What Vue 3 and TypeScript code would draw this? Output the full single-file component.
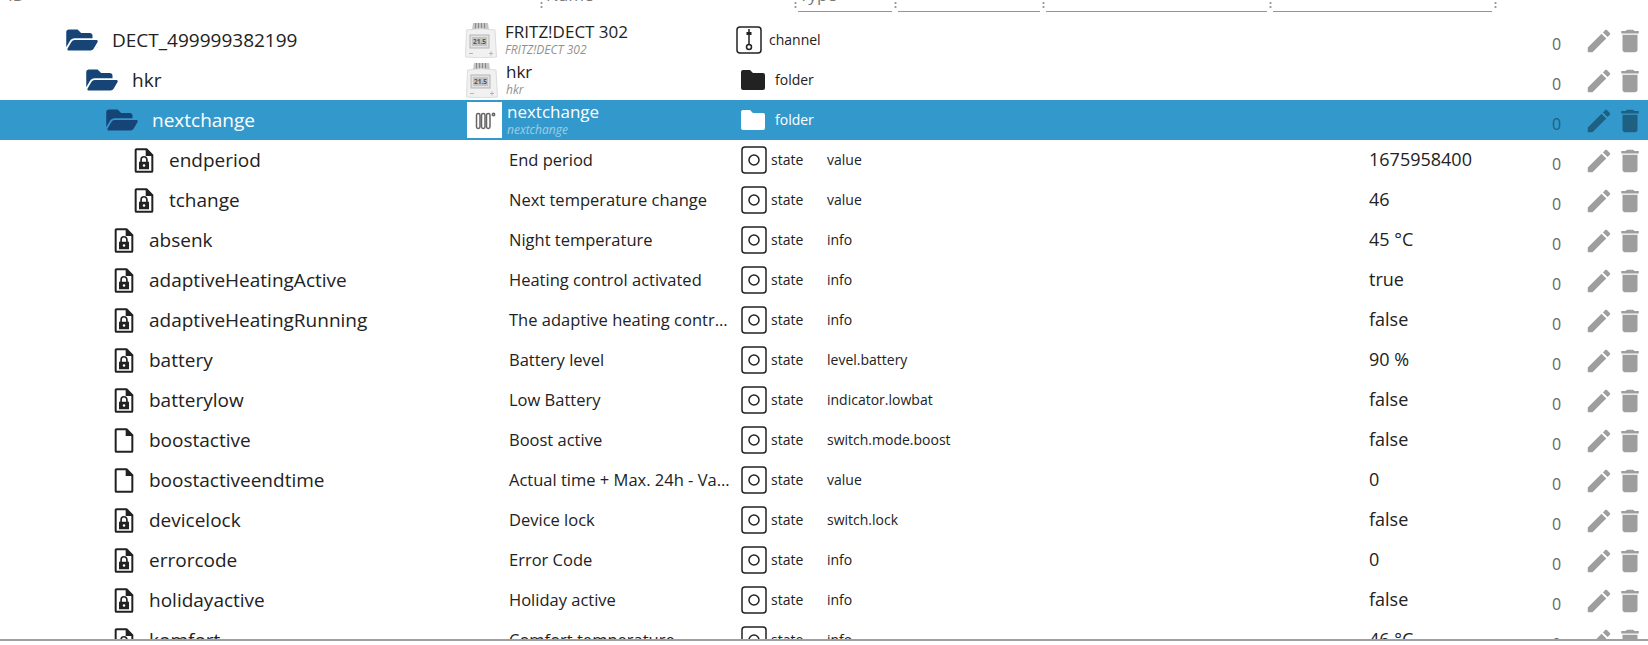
<script setup lang="ts">
type Row = {
  id: string
  indent: number
  icon: 'open' | 'lock' | 'file'
  name: string
  sub?: string
  pic?: 'dect' | 'radiator'
  picShift?: number
  type: 'channel' | 'folder' | 'state'
  role?: string
  value?: string
  selected?: boolean
}

const rows: Row[] = [
  { id: 'DECT_499999382199', indent: 66, icon: 'open', name: 'FRITZ!DECT 302', sub: 'FRITZ!DECT 302', pic: 'dect', picShift: 0, type: 'channel' },
  { id: 'hkr', indent: 86, icon: 'open', name: 'hkr', sub: 'hkr', pic: 'dect', picShift: 1, type: 'folder' },
  { id: 'nextchange', indent: 106, icon: 'open', name: 'nextchange', sub: 'nextchange', pic: 'radiator', picShift: 2, type: 'folder', selected: true },
  { id: 'endperiod', indent: 134, icon: 'lock', name: 'End period', type: 'state', role: 'value', value: '1675958400' },
  { id: 'tchange', indent: 134, icon: 'lock', name: 'Next temperature change', type: 'state', role: 'value', value: '46' },
  { id: 'absenk', indent: 114, icon: 'lock', name: 'Night temperature', type: 'state', role: 'info', value: '45 °C' },
  { id: 'adaptiveHeatingActive', indent: 114, icon: 'lock', name: 'Heating control activated', type: 'state', role: 'info', value: 'true' },
  { id: 'adaptiveHeatingRunning', indent: 114, icon: 'lock', name: 'The adaptive heating contr...', type: 'state', role: 'info', value: 'false' },
  { id: 'battery', indent: 114, icon: 'lock', name: 'Battery level', type: 'state', role: 'level.battery', value: '90 %' },
  { id: 'batterylow', indent: 114, icon: 'lock', name: 'Low Battery', type: 'state', role: 'indicator.lowbat', value: 'false' },
  { id: 'boostactive', indent: 114, icon: 'file', name: 'Boost active', type: 'state', role: 'switch.mode.boost', value: 'false' },
  { id: 'boostactiveendtime', indent: 114, icon: 'file', name: 'Actual time + Max. 24h - Va...', type: 'state', role: 'value', value: '0' },
  { id: 'devicelock', indent: 114, icon: 'lock', name: 'Device lock', type: 'state', role: 'switch.lock', value: 'false' },
  { id: 'errorcode', indent: 114, icon: 'lock', name: 'Error Code', type: 'state', role: 'info', value: '0' },
  { id: 'holidayactive', indent: 114, icon: 'lock', name: 'Holiday active', type: 'state', role: 'info', value: 'false' },
  { id: 'komfort', indent: 114, icon: 'lock', name: 'Comfort temperature', type: 'state', role: 'info', value: '46 °C' },
]
</script>

<template>
  <div class="page">
    <div class="head">
      <div class="head-cell head-id"><span>ID</span></div>
      <i class="sep sep--wide"></i>
      <div class="head-cell head-name"><span>Name</span></div>
      <i class="sep"></i>
      <div class="head-cell head-short head-type"><span>Type</span></div>
      <i class="sep"></i>
      <div class="head-cell head-short head-role"></div>
      <i class="sep"></i>
      <div class="head-cell head-short head-room"></div>
      <i class="sep"></i>
      <div class="head-cell head-short head-func"></div>
      <i class="sep"></i>
    </div>

    <div class="list">
      <div
        v-for="row in rows"
        :key="row.id"
        :class="['row', { 'row--selected': row.selected }]"
      >
        <div class="cell-id" :style="{ paddingLeft: row.indent + 'px' }">
          <svg v-if="row.icon === 'open'" class="ic-open" viewBox="0 0 576 512">
            <path fill="#164477" d="M572.7 292.1L500.3 416.2A64 64 0 0 1 445 448H45c-18.500 0-30.100-20.100-20.700-36.100l72.400-124.200A64 64 0 0 1 152 256h400c18.500 0 30.100 20.100 20.700 36.100zM152 224h328v-48c0-26.500-21.500-48-48-48H272l-64-64H48C21.500 64 0 85.500 0 112v278l69.100-118.400C86.200 242.300 118 224 152 224z" />
          </svg>
          <svg v-else class="ic-file" viewBox="0 0 24 30">
            <path fill="none" stroke="#222" stroke-width="2.400" stroke-linejoin="round" d="M3 1.500h12l7 7v19a1 1 0 0 1-1 1H3a1 1 0 0 1-1-1v-25a1 1 0 0 1 1-1z" />
            <path fill="#222" d="M14 1.500h1.800l6.200 6.200v1.800h-8z" />
            <g v-if="row.icon === 'lock'" fill="#222">
              <path d="M6 16.500h12v9H6z" />
              <path fill="none" stroke="#222" stroke-width="2" d="M8.500 17v-3a3.500 3.500 0 0 1 7 0v3" />
              <circle cx="12" cy="21" r="1.500" fill="#fff" />
            </g>
          </svg>
          <span class="id-text">{{ row.id }}</span>
        </div>

        <div class="cell-name">
          <div v-if="row.pic" class="pic" :style="{ marginLeft: row.picShift + 'px' }">
            <svg v-if="row.pic === 'dect'" viewBox="0 0 36 36">
              <path fill="#c4c4c4" d="M8 1h15l1 7H7z" />
              <path fill="#8a8a8a" d="M10 1h1v7h-1zM13 1h1v7h-1zM16 1h1v7h-1zM19 1h1v7h-1z" />
              <path fill="#f1f1f1" stroke="#dcdcdc" d="M1.500 8q14-2.500 28.500 0l1.500 27q-15 1.500-31 0z" />
              <rect x="5" y="13" width="19" height="13" fill="#e2e2e2" stroke="#b5b5b5" />
              <rect x="7" y="15" width="15" height="9" fill="#c4c4c4" />
              <text x="14.500" y="22" class="lcd">21.5</text>
              <path fill="#b5b5b5" d="M4 31h4v1H4zM24 31h4v1h-4zM25.500 29.500h1v4h-1z" />
            </svg>
            <svg v-else viewBox="0 0 36 36">
              <rect width="35" height="36" fill="#fff" />
              <g fill="none" stroke="#666" stroke-width="1.500">
                <rect x="9.500" y="11.500" width="3.500" height="15" rx="1.700" />
                <rect x="14.500" y="11.500" width="3.500" height="15" rx="1.700" />
                <rect x="19.500" y="11.500" width="3.500" height="15" rx="1.700" />
                <circle cx="26.500" cy="12.500" r="1.200" />
              </g>
            </svg>
          </div>
          <div v-if="row.sub" class="name-stack">
            <div class="name-main">{{ row.name }}</div>
            <div class="name-sub">{{ row.sub }}</div>
          </div>
          <div v-else class="name-plain">{{ row.name }}</div>
        </div>

        <div class="cell-type">
          <svg v-if="row.type === 'state'" class="ic-type" viewBox="0 0 26 28">
            <rect x="1" y="1" width="24" height="26" rx="3" fill="none" stroke="#222" stroke-width="1.500" />
            <circle cx="13" cy="14" r="5" fill="none" stroke="#222" stroke-width="1.500" />
          </svg>
          <svg v-else-if="row.type === 'channel'" class="ic-type ic-type--channel" viewBox="0 0 26 28">
            <rect x="1" y="1" width="24" height="26" rx="3" fill="none" stroke="#222" stroke-width="1.500" />
            <path fill="none" stroke="#222" stroke-width="1.500" d="M13 3v15" />
            <rect x="10.500" y="6" width="5" height="3" fill="#222" />
            <circle cx="13" cy="21" r="2.500" fill="none" stroke="#222" stroke-width="1.500" />
          </svg>
          <svg v-else class="ic-folder" viewBox="0 0 24 20">
            <path fill="currentColor" d="M2 0h7l3 3h10a2 2 0 0 1 2 2v13a2 2 0 0 1-2 2H2a2 2 0 0 1-2-2V2a2 2 0 0 1 2-2z" />
          </svg>
          <span :class="['type-text', { 'type-text--folder': row.type === 'folder' }]">{{ row.type }}</span>
        </div>

        <div class="cell-role">{{ row.role }}</div>
        <div class="cell-value">{{ row.value }}</div>
        <div class="cell-count">0</div>
        <div class="cell-actions">
          <svg class="ic-act" viewBox="0 0 24 24">
            <path d="M3 17.250V21h3.750L17.810 9.940l-3.750-3.750L3 17.250zM20.710 7.040c.39-.39.39-1.020 0-1.410l-2.340-2.340c-.39-.39-1.020-.39-1.410 0l-1.830 1.830 3.750 3.750 1.830-1.830z" />
          </svg>
          <svg class="ic-act" viewBox="0 0 24 24">
            <path d="M6 19c0 1.100.9 2 2 2h8c1.100 0 2-.9 2-2V7H6v12zM19 4h-3.500l-1-1h-5l-1 1H5v2h14V4z" />
          </svg>
        </div>
      </div>
    </div>
    <div class="foot"></div>
  </div>
</template>

<style scoped>
.page {
  width: 1648px;
  height: 645px;
  overflow: hidden;
  background: #fff;
  color: #222;
  font-family: "Open Sans", "Noto Sans", sans-serif;
  display: flex;
  flex-direction: column;
}

.head {
  height: 15px;
  flex: none;
  display: flex;
  padding-left: 7px;
  overflow: hidden;
  box-sizing: border-box;
  align-items: flex-start;
}

.head-cell {
  height: 15.500px;
  flex: none;
  box-sizing: border-box;
  border-bottom: 1.500px solid #949494;
  font-size: 17px;
  line-height: 14px;
  color: #777;
}

.head-short {
  height: 11.500px;
}

.head-cell span {
  display: block;
  margin: -12px 0 0 1px;
}

.sep {
  width: 6px;
  height: 9px;
  flex: none;
  margin-top: 1px;
  background: radial-gradient(circle, #999 1px, transparent 1.200px) center top / 3px 4px repeat-y;
}

.sep--wide {
  width: 8px;
}

.head-id { width: 530px; }
.head-name { width: 247px; }
.head-type { width: 94px; }
.head-role { width: 142px; }
.head-room { width: 221px; }
.head-func { width: 219px; }

.list {
  flex: none;
  height: 624px;
  padding-top: 5px;
  box-sizing: border-box;
  overflow: hidden;
}

.row {
  height: 40px;
  display: flex;
  align-items: center;
}

.row--selected {
  background: #3399cc;
  color: #fff;
}

.cell-id {
  width: 465px;
  flex: none;
  box-sizing: border-box;
  display: flex;
  align-items: center;
  font-size: 19px;
  white-space: nowrap;
}

.ic-open {
  width: 32px;
  height: 28px;
  flex: none;
  margin-right: 14px;
}

.ic-file {
  width: 20px;
  height: 27px;
  flex: none;
  margin-right: 15px;
}

.cell-name {
  width: 276px;
  flex: none;
  display: flex;
  align-items: center;
  box-sizing: border-box;
}

.pic {
  width: 36px;
  height: 36px;
  flex: none;
  margin-right: 4px;
}

.pic svg {
  width: 100%;
  height: 100%;
  display: block;
}

.lcd {
  font-size: 6.500px;
  font-weight: 700;
  fill: #555;
  text-anchor: middle;
}

.name-main {
  font-size: 17px;
  line-height: 21px;
  margin-top: -1px;
}

.name-sub {
  font-size: 12px;
  font-style: italic;
  line-height: 16px;
  opacity: 0.5;
}

.name-plain {
  padding-left: 44px;
  padding-bottom: 2px;
  font-size: 16.500px;
  white-space: nowrap;
}

.cell-type {
  width: 86px;
  flex: none;
  display: flex;
  align-items: center;
  font-size: 14px;
}

.type-text {
  padding-bottom: 2px;
}

.ic-type {
  width: 26px;
  height: 28px;
  flex: none;
  margin-right: 4px;
}

.ic-type--channel {
  margin-left: -5px;
  margin-right: 7px;
}

.ic-folder {
  width: 24px;
  height: 20px;
  flex: none;
  color: #222;
  margin: 0 8px 0 0;
}

.row--selected .ic-folder {
  color: #fff;
}

.type-text--folder {
  padding-left: 2px;
}

.cell-role {
  width: 542px;
  flex: none;
  font-size: 14px;
  padding-bottom: 2px;
  box-sizing: border-box;
}

.cell-value {
  width: 183px;
  flex: none;
  font-size: 18px;
  padding-bottom: 2px;
  box-sizing: border-box;
}

.cell-count {
  width: 32px;
  flex: none;
  font-size: 16px;
  color: #666;
  padding-top: 8px;
}

.row--selected .cell-count {
  color: #1f5f82;
}

.cell-actions {
  display: flex;
  gap: 1px;
  flex: none;
  margin-top: 2px;
}

.ic-act {
  width: 30px;
  height: 30px;
  fill: #9e9e9e;
}

.row--selected .ic-act {
  fill: #1f5f82;
}

.foot {
  height: 1.500px;
  background: #a0a0a0;
  flex: none;
}
</style>
